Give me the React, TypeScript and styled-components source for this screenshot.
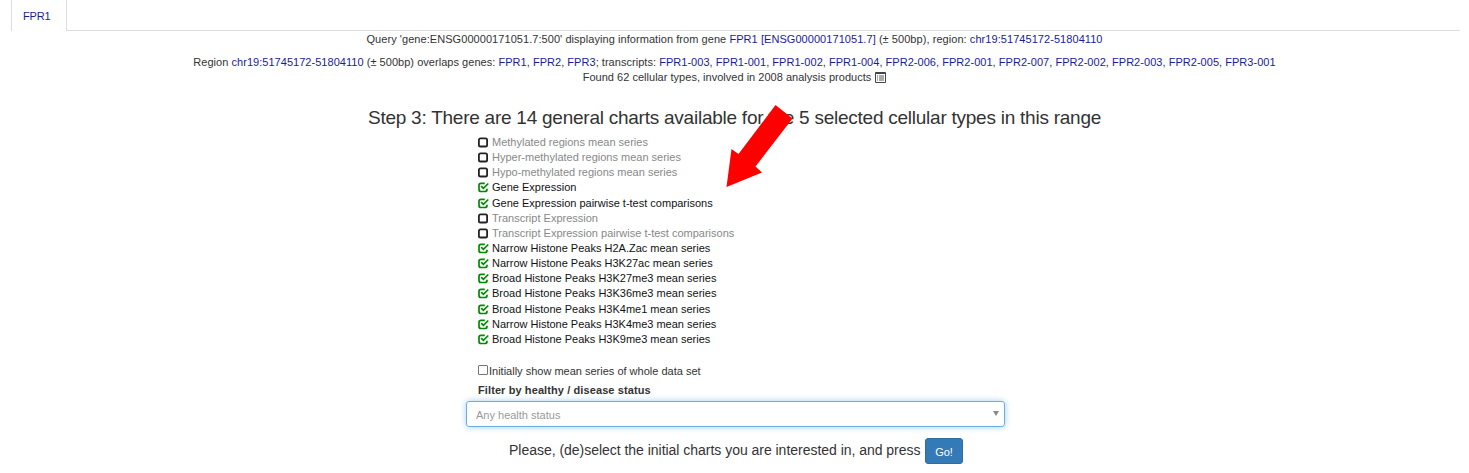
import React from "react";
import styled, { createGlobalStyle } from "styled-components";

const GlobalStyle = createGlobalStyle`
  *, *::before, *::after { box-sizing: border-box; }
  body {
    margin: 0;
    background: #fff;
    color: #333;
    font: 11px/15.15px "Liberation Sans", Arial, sans-serif;
    overflow: hidden;
  }
`;

const Page = styled.div`
  position: relative;
  width: 1469px;
  height: 473px;
  overflow: hidden;
`;

const Tabs = styled.nav`
  display: flex;
  height: 31px;
  margin: 0 9px 0 11px;
`;

const Tab = styled.a`
  width: 56px;
  padding: 9px 0 0 11px;
  border: 1px solid #ddd;
  border-width: 0 1px;
  color: #1a1a9c;
  letter-spacing: -0.2px;
  text-decoration: none;
`;

const TabRest = styled.div`
  flex: 1;
  border-bottom: 1px solid #ddd;
`;

const Link = styled.a`
  color: #1a1a9c;
  text-decoration: none;
`;

const Line = styled.p<{ $top: number; $spacing?: number }>`
  display: flex;
  justify-content: center;
  align-items: center;
  white-space: pre;
  margin: ${(p) => p.$top}px 0 0;
  height: 15px;
  letter-spacing: ${(p) => p.$spacing ?? 0}px;
`;

const Heading = styled.h3`
  margin: 21px 0 0;
  height: 24px;
  text-align: center;
  white-space: nowrap;
  font-size: 19px;
  letter-spacing: -0.245px;
  line-height: 24px;
  font-weight: 400;
`;

const ChartList = styled.ul`
  margin: 5px 0 0 478px;
  padding: 0;
  list-style: none;
`;

const ChartItem = styled.li<{ $on: boolean }>`
  display: flex;
  align-items: center;
  height: 15.15px;
  color: ${(p) => (p.$on ? "#111" : "#888")};
  white-space: nowrap;
`;

const BoxIcon = styled.svg`
  width: 11px;
  height: 11px;
  margin-right: 3px;
  flex: none;
`;

const MeanOption = styled.label`
  display: flex;
  align-items: center;
  height: 15px;
  margin: 17px 0 0 478px;
`;

const Check = styled.span`
  width: 10px;
  height: 10px;
  margin: -3px 1px 0 0;
  border: 1px solid #767676;
  border-radius: 1px;
`;

const FilterLabel = styled.div`
  margin: 4px 0 0 478px;
  height: 15px;
  font-weight: 700;
  letter-spacing: 0.1px;
`;

const Select = styled.div`
  display: flex;
  align-items: center;
  justify-content: space-between;
  width: 539px;
  height: 26px;
  margin: 3px 0 0 466px;
  padding: 4px 5px 0 9px;
  border: 1px solid #66afe9;
  border-radius: 3px;
  box-shadow: 0 0 6px rgba(102, 175, 233, 0.6);
  color: #999;
`;

const Caret = styled.span`
  margin-top: -4px;
  border: solid transparent;
  border-width: 5px 3px 0;
  border-top-color: #888;
`;

const Footer = styled.div`
  display: flex;
  margin: 11px 0 0 509px;
`;

const Prompt = styled.span`
  width: 416px;
  font-size: 14px;
  letter-spacing: -0.025px;
  line-height: 24px;
  white-space: nowrap;
`;

const GoButton = styled.button`
  width: 38px;
  height: 26px;
  padding: 3px 0 0;
  border: 1px solid #2e6da4;
  border-radius: 3px;
  background: #337ab7;
  color: #fff;
  font: 11px "Liberation Sans", Arial, sans-serif;
`;

const Arrow = styled.svg`
  position: absolute;
  left: 720px;
  top: 100px;
`;

const ListIcon = styled.svg`
  width: 11px;
  height: 11px;
  margin: -1px 0 0 4px;
`;

const charts: [string, boolean][] = [
  ["Methylated regions mean series", false],
  ["Hyper-methylated regions mean series", false],
  ["Hypo-methylated regions mean series", false],
  ["Gene Expression", true],
  ["Gene Expression pairwise t-test comparisons", true],
  ["Transcript Expression", false],
  ["Transcript Expression pairwise t-test comparisons", false],
  ["Narrow Histone Peaks H2A.Zac mean series", true],
  ["Narrow Histone Peaks H3K27ac mean series", true],
  ["Broad Histone Peaks H3K27me3 mean series", true],
  ["Broad Histone Peaks H3K36me3 mean series", true],
  ["Broad Histone Peaks H3K4me1 mean series", true],
  ["Narrow Histone Peaks H3K4me3 mean series", true],
  ["Broad Histone Peaks H3K9me3 mean series", true],
];

const genes = ["FPR1", "FPR2", "FPR3"];
const transcripts = [
  "FPR1-003", "FPR1-001", "FPR1-002", "FPR1-004", "FPR2-006", "FPR2-001",
  "FPR2-007", "FPR2-002", "FPR2-003", "FPR2-005", "FPR3-001",
];

const Links = ({ items }: { items: string[] }) => (
  <>
    {items.map((item, i) => (
      <React.Fragment key={item}>
        {i > 0 && ", "}
        <Link>{item}</Link>
      </React.Fragment>
    ))}
  </>
);

const ChartBox = ({ on }: { on: boolean }) =>
  on ? (
    <BoxIcon viewBox="0 0 11 11" fill="none" stroke="#008a00">
      <path d="M6.8 1.4H3Q1 1.4 1 3.4V7.5Q1 9.5 3 9.5H7Q9 9.5 9 7.5V6.8" strokeWidth="1.7" />
      <path d="M3.2 4.2L5.4 6.4L10.3 1.5" strokeWidth="1.7" />
    </BoxIcon>
  ) : (
    <BoxIcon viewBox="0 0 11 11" fill="none" stroke="#222">
      <rect x="0.9" y="1.3" width="8.2" height="8.2" rx="1.6" strokeWidth="1.8" />
    </BoxIcon>
  );

export default function App() {
  return (
    <Page>
      <GlobalStyle />
      <Tabs>
        <Tab>FPR1</Tab>
        <TabRest />
      </Tabs>
      <Line $top={1} $spacing={0.06}>
        <span>
          Query 'gene:ENSG00000171051.7:500' displaying information from gene{" "}
          <Link>FPR1 [ENSG00000171051.7]</Link> (± 500bp), region: <Link>chr19:51745172-51804110</Link>
        </span>
      </Line>
      <Line $top={8} $spacing={0.036}>
        <span>
          Region <Link>chr19:51745172-51804110</Link> (± 500bp) overlaps genes: <Links items={genes} />; transcripts:{" "}
          <Links items={transcripts} />
        </span>
      </Line>
      <Line $top={0} $spacing={0.02}>
        <span>Found 62 cellular types, involved in 2008 analysis products</span>
        <ListIcon viewBox="0 0 11 11">
          <path d="M.5 .5H10.5V10.5H.5ZM.5 1.5H10.5" fill="none" stroke="#444" />
          <path d="M2 4H3M4 4H9M2 6H3M4 6H9M2 8H3M4 8H9" stroke="#555" />
        </ListIcon>
      </Line>
      <Heading>Step 3: There are 14 general charts available for the 5 selected cellular types in this range</Heading>
      <ChartList>
        {charts.map(([name, on]) => (
          <ChartItem key={name} $on={on}>
            <ChartBox on={on} />
            <span>{name}</span>
          </ChartItem>
        ))}
      </ChartList>
      <MeanOption>
        <Check />
        Initially show mean series of whole data set
      </MeanOption>
      <FilterLabel>Filter by healthy / disease status</FilterLabel>
      <Select>
        <span>Any health status</span>
        <Caret />
      </Select>
      <Footer>
        <Prompt>Please, (de)select the initial charts you are interested in, and press</Prompt>
        <GoButton>Go!</GoButton>
      </Footer>
      <Arrow width="80" height="95" viewBox="0 0 80 95">
        <path d="M55.5 5L72.5 18.5L35.5 66.5L42 72.5L6.5 87L11.5 49L18.5 54Z" fill="#f00" />
      </Arrow>
    </Page>
  );
}
